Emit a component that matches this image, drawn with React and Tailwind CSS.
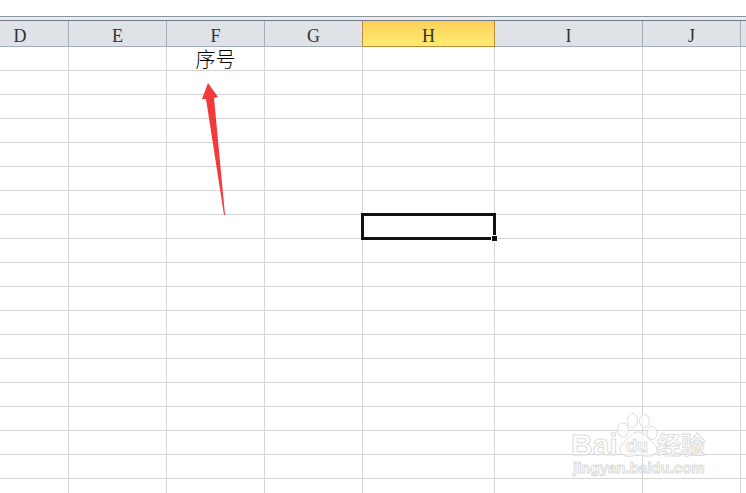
const columns = [
  { name: "D", head: "w-[69px] pr-7" },
  { name: "E", head: "w-[98px]" },
  { name: "F", head: "w-[98px]" },
  { name: "G", head: "w-[98px]" },
  { name: "H", head: "w-[132px]" },
  { name: "I", head: "w-[148px]" },
  { name: "J", head: "w-[98px]" },
  { name: "", head: "" },
];

const rows = Array.from({ length: 19 }, (_, i) => i + 1);
const values = { F1: "序号" };
const selected = "H8";

function Selection() {
  return (
    <div className="absolute -inset-[2px] z-10 border-[3px] border-[#111]">
      <span className="absolute -right-[5px] -bottom-[5px] size-[7px] border border-white bg-[#111]" />
    </div>
  );
}

function Arrow() {
  return (
    <svg
      className="absolute left-[34px] top-[35px] z-10"
      width="28"
      height="134"
      viewBox="0 0 28 134"
    >
      <path
        d="M7 1 L17 15 L13 16 L24 133 L23 133 L5 17 L1 17 Z"
        fill="#f23a3a"
      />
    </svg>
  );
}

function Watermark() {
  return (
    <svg
      className="pointer-events-none absolute right-9 bottom-3 z-20"
      width="142"
      height="73"
      viewBox="568 408 142 73"
      fill="#fff"
      fillOpacity="0.6"
      stroke="#dcdcdc"
      strokeWidth="1"
      fontFamily="'Liberation Sans', 'Noto Sans CJK SC', sans-serif"
      fontWeight="bold"
    >
      <text x="571" y="455" fontSize="30">
        Bai
      </text>
      <ellipse cx="623" cy="430" rx="5.500" ry="7" />
      <ellipse cx="632.500" cy="420.500" rx="5" ry="7" />
      <ellipse cx="644.500" cy="421" rx="5" ry="6.500" />
      <ellipse cx="652" cy="433" rx="5" ry="6.500" />
      <path d="M638 432 C632 432 630 437 625 441 C620 445 618 450 622 454 C626 458 632 455.500 638 455.500 C645 455.500 651 458 655 454 C659 449 656 445 651 441 C646 437 645 432 638 432 Z" />
      <text x="626" y="452" fontSize="18">
        du
      </text>
      <text x="657" y="454" fontSize="24">
        经验
      </text>
      <text x="573" y="473" fontSize="15">
        jingyan.baidu.com
      </text>
    </svg>
  );
}

export default function App() {
  return (
    <main className="relative flex h-screen flex-col overflow-hidden bg-white pt-4">
      <div className="h-1 shrink-0 border-t border-[#8b959d] bg-[#e9edf0]" />

      <table className="w-full table-fixed border-separate border-spacing-0 border-t border-[#72787d] font-['Liberation_Serif','Noto_Sans_CJK_SC',serif]">
        <thead>
          <tr className="h-[26px]">
            {columns.map(({ name, head }) => (
              <th
                key={name}
                scope="col"
                className={`${head} border-r border-b pt-1 pb-0 text-lg leading-5 font-normal text-[#333] last:border-r-0 ${
                  name === "H"
                    ? "border-[#c08a3c] bg-linear-to-b from-[#fdd05a] to-[#fdec70]"
                    : name === "G"
                      ? "border-r-[#c08a3c] border-b-[#a2adb6] bg-[#dfe2e7]"
                      : "border-[#a2adb6] bg-[#dfe2e7]"
                }`}
              >
                {name}
              </th>
            ))}
          </tr>
        </thead>
        <tbody>
          {rows.map((row) => (
            <tr key={row} className="h-6">
              {columns.map(({ name }) => {
                const id = `${name}${row}`;
                return (
                  <td
                    key={id}
                    className="relative border-r border-b border-[#d4d4d4] px-0 pt-[3px] pb-0 text-center text-xl leading-5 font-light text-black last:border-r-0"
                  >
                    {values[id]}
                    {id === "F1" && <Arrow />}
                    {id === selected && <Selection />}
                  </td>
                );
              })}
            </tr>
          ))}
        </tbody>
      </table>

      <Watermark />
    </main>
  );
}
